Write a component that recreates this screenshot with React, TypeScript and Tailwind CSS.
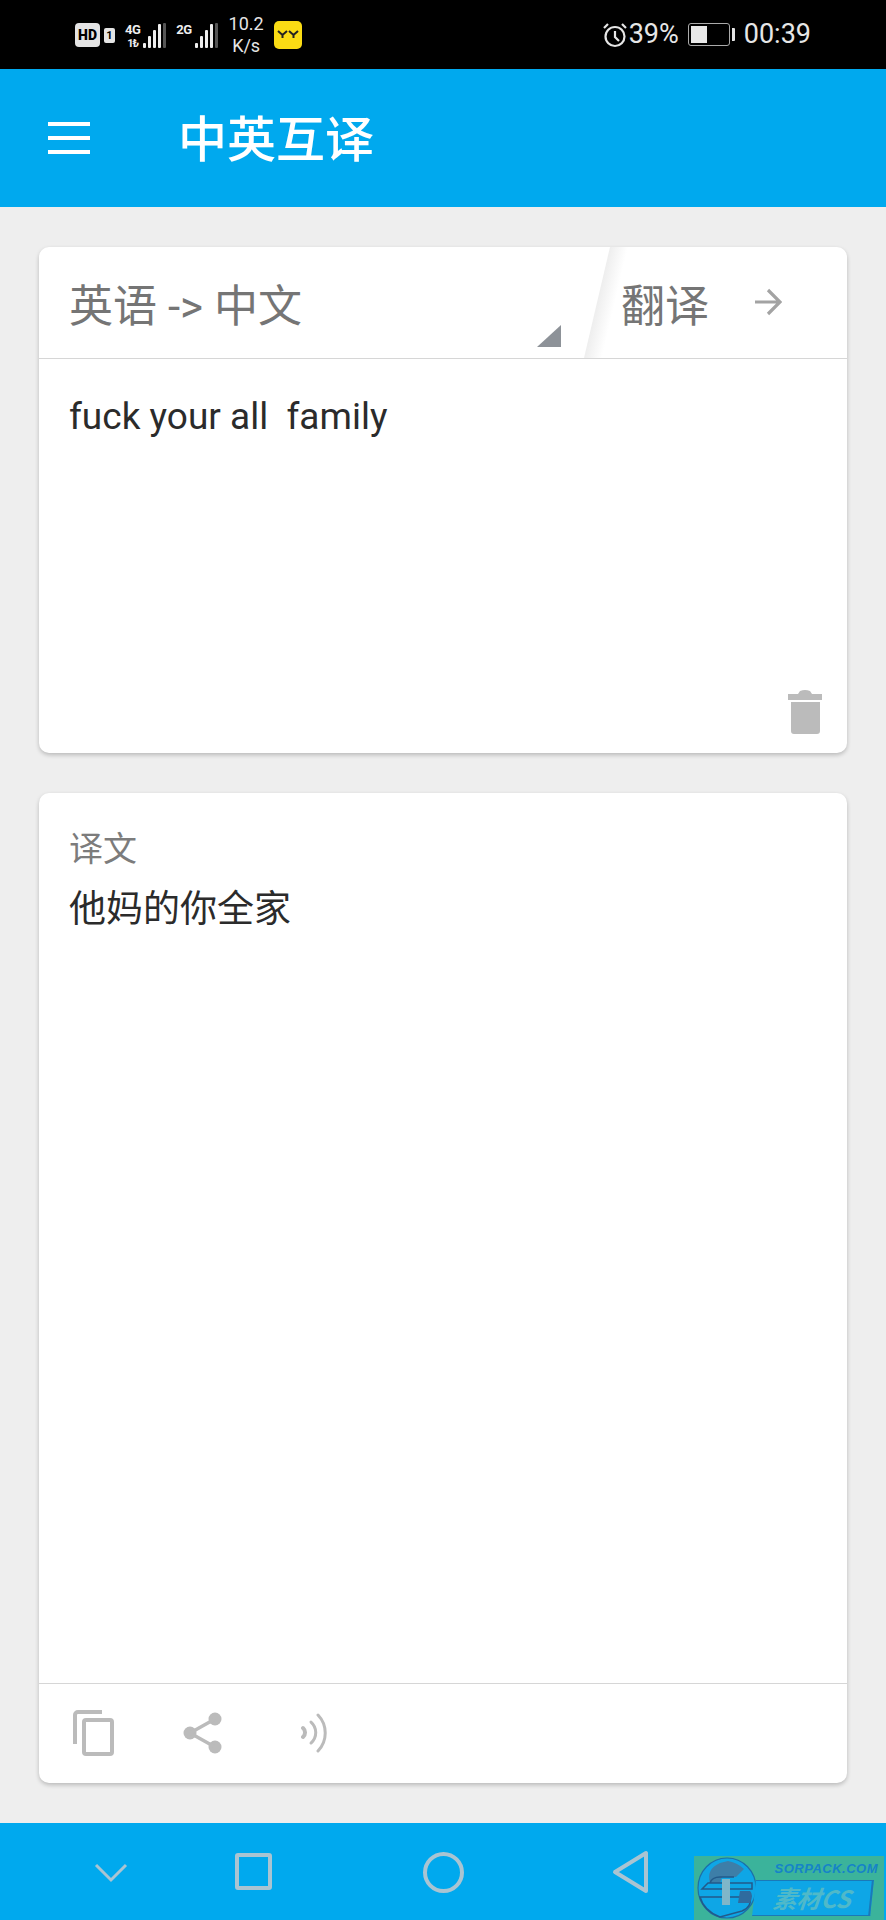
const cjk = "font-['Roboto','Noto_Sans_CJK_SC',sans-serif]"

function Signal({ label, dot }: { label: string; dot?: boolean }) {
  const heights = [5, 12, 18, 24]
  return (
    <div className="flex items-end gap-[2px] h-[26px]">
      <div className="flex flex-col items-center justify-between h-[25px] mr-[1px] font-['Roboto',sans-serif] font-bold text-[#eeeeee]">
        <span className="text-[13px] leading-[13px] tracking-[-0.5px]">{label}</span>
        {dot ? <span className="text-[11px] leading-[9px] tracking-[-1px]">1₺</span> : <span />}
      </div>
      {heights.map((h, i) => (
        <div key={i} className="w-[3px] bg-[#eeeeee] rounded-[1px]" style={{ height: h }} />
      ))}
      <div className="w-[3px] h-[25px] bg-[#555555] rounded-[1px]" />
    </div>
  )
}

function StatusBar() {
  return (
    <div className="h-[69px] bg-black flex items-center justify-between pl-[75px] pr-[75px] text-[#e6e6e6] font-['Roboto',sans-serif]">
      <div className="flex items-center">
        <div className="w-[25px] h-[24px] bg-[#e4e4e4] rounded-[4px] text-black text-[14px] leading-[24px] font-black text-center">HD</div>
        <div className="ml-[4px] mr-[10px] w-[11px] h-[15px] mt-[2px] bg-[#e4e4e4] rounded-[2px] text-black text-[11px] leading-[15px] font-bold text-center">1</div>
        <Signal label="4G" dot />
        <div className="w-[10px]" />
        <Signal label="2G" />
        <div className="ml-[10px] w-[37px] text-center text-[18px] leading-[22px]">
          <div>10.2</div>
          <div>K/s</div>
        </div>
        <div className="ml-[9px] w-[28px] h-[28px] rounded-[5px] bg-[#fbdc14] flex items-center justify-center">
          <svg width="22" height="10" viewBox="0 0 22 10" fill="none" stroke="#222" strokeWidth="2">
            <path d="M1 1l4.500 4L10 1M5.500 5v3M12 1l4.500 4L21 1M16.500 5v3" />
          </svg>
        </div>
      </div>
      <div className="flex items-center">
        <svg width="26" height="26" viewBox="0 0 26 26" fill="none" stroke="#e6e6e6" strokeWidth="2.200" className="mr-[1px]">
          <circle cx="13" cy="14.500" r="9.500" />
          <path d="M13 9v6l4 4M2 6l4-4M24 6l-4-4" />
        </svg>
        <span className="text-[27px] leading-none">39%</span>
        <div className="ml-[9px] w-[42px] h-[23px] border border-[#aaaaaa] rounded-[3px] p-[2px]">
          <div className="w-[16px] h-full bg-[#e8e8e8]" />
        </div>
        <div className="ml-[2px] w-[3px] h-[13px] bg-[#e4e4e4] rounded-r-[1px]" />
        <span className="ml-[9px] text-[27px] leading-none">00:39</span>
      </div>
    </div>
  )
}

function Header() {
  return (
    <header className="h-[138px] bg-[#00a9ee] flex items-center pl-[48px]">
      <div className="w-[42px] flex flex-col gap-[10px]">
        <div className="h-[4px] bg-white" />
        <div className="h-[4px] bg-white" />
        <div className="h-[4px] bg-white" />
      </div>
      <h1 className={`ml-[88px] mt-[4px] text-white text-[49px] leading-none font-medium ${cjk}`}>中英互译</h1>
    </header>
  )
}

function InputCard() {
  return (
    <section className="relative h-[506px] bg-white rounded-[10px] shadow-[0_2px_4px_rgba(0,0,0,0.22)] flex flex-col">
      <div className="relative h-[112px] border-b border-[#d6d6d6] flex items-center overflow-hidden">
        <span className={`ml-[30px] mt-[9px] text-[44px] leading-none text-[#757575] whitespace-pre ${cjk}`}>英语 -&gt; 中文</span>
        {/* slanted shade at the edge of the translate button */}
        <svg className="absolute left-[545px] top-0" width="50" height="111" viewBox="0 0 50 111">
          <defs>
            <linearGradient id="edge" gradientUnits="userSpaceOnUse" x1="0" y1="111" x2="17" y2="115">
              <stop offset="0" stopColor="#eeeeee" />
              <stop offset="1" stopColor="#ffffff" />
            </linearGradient>
          </defs>
          <path d="M26 0h24L24 111H0z" fill="url(#edge)" />
        </svg>
        <svg className="absolute left-[498px] top-[78px]" width="24" height="23" viewBox="0 0 24 23">
          <path d="M24 0v22H0z" fill="#8d9298" />
        </svg>
        <span className={`absolute left-[582px] top-[38px] text-[44px] leading-none text-[#757575] ${cjk}`}>翻译</span>
        <svg className="absolute left-[715px] top-[41px]" width="28" height="28" viewBox="0 0 28 28" fill="none" stroke="#a3a3a3" strokeWidth="3.200">
          <path d="M1 14h25M14 2l12 12-12 12" />
        </svg>
      </div>
      <p className={`px-[30px] pt-[36px] text-[37px] leading-[44px] text-[#2b2b2b] whitespace-pre ${cjk}`}>fuck your all  family</p>
      <svg className="absolute left-[749px] top-[443px]" width="34" height="44" viewBox="0 0 34 44" fill="#bbbbbb">
        <path d="M0 4h10l2-3q5-2 10 0l2 3h10v6H0zM3 12h29v29a3 3 0 0 1-3 3H6a3 3 0 0 1-3-3z" />
      </svg>
    </section>
  )
}

function ResultCard() {
  return (
    <section className="h-[990px] bg-white rounded-[10px] shadow-[0_2px_4px_rgba(0,0,0,0.22)] flex flex-col">
      <div className="flex-1 px-[30px] pt-[36px]">
        <div className={`text-[34px] leading-[40px] text-[#7c7c7c] ${cjk}`}>译文</div>
        <div className={`mt-[19px] text-[37px] leading-[44px] text-[#2b2b2b] ${cjk}`}>他妈的你全家</div>
      </div>
      <div className="h-[100px] border-t border-[#d6d6d6] flex items-center pl-[34px] pb-[1px]">
        <svg width="41" height="46" viewBox="0 0 41 46" fill="none" stroke="#bbbbbb" strokeWidth="4">
          <path d="M2 34V5a3 3 0 0 1 3-3h24" />
          <rect x="11" y="10" width="28" height="34" rx="2" />
        </svg>
        <svg className="ml-[69px]" width="40" height="42" viewBox="0 0 40 42" fill="#bbbbbb">
          <circle cx="7" cy="21" r="6.500" />
          <circle cx="32" cy="7" r="6.500" />
          <circle cx="32" cy="35" r="6.500" />
          <path d="M7 21L32 7M7 21l25 14" stroke="#bbbbbb" strokeWidth="3.500" />
        </svg>
        <svg className="ml-[78px]" width="28" height="40" viewBox="0 0 28 40" fill="none" stroke="#bbbbbb" strokeWidth="3" strokeLinecap="round">
          <path d="M2 15a6 6 0 0 1 0 9" strokeWidth="4" />
          <path d="M10 9a14 14 0 0 1 0 21" />
          <path d="M17 2a26 26 0 0 1 0 36" />
        </svg>
      </div>
    </section>
  )
}

function Watermark() {
  return (
    <div className="absolute left-[694px] top-[33px] w-[190px] h-[64px] bg-[#3bb39b] flex items-center overflow-hidden">
      <svg width="62" height="62" viewBox="0 0 62 62" className="ml-[2px] shrink-0">
        <ellipse cx="31" cy="31" rx="29" ry="30" fill="#0ea6e6" stroke="#1c6fa8" strokeWidth="1.200" />
        <path d="M14 26q-4-14 10-20l8-2q10 2 16 8l-8 8H26l-2 6z" fill="#3d7ea8" />
        <path d="M12 26h44v6H6zM14 26q2-6 10-6h14" fill="none" stroke="#235a8a" strokeWidth="1.500" />
        <path d="M4 40h40q8-6 10 0 2 10-8 14l-22 6Q8 54 4 40z" fill="#0ea6e6" stroke="#235a8a" strokeWidth="1.500" />
        <path d="M44 34h10q4 4 0 12H42z" fill="#2f6b9e" />
        <path d="M26 22h8v26h-8z" fill="#7fb6c9" />
      </svg>
      <div className="flex-1 min-w-0 font-['Liberation_Sans',sans-serif] italic font-bold">
        <div className="text-[#1583c8] text-[13px] leading-[15px] tracking-[0.5px] text-right pr-[6px]">SORPACK.COM</div>
        <div className="mt-[4px] mr-[12px] ml-[-4px] h-[36px] -skew-x-6 bg-[#0ea6e6] border-y border-r-2 border-[#1a79b8] flex items-center justify-center text-[#4fb9c9] text-[24px] leading-none font-['Noto_Sans_CJK_SC',sans-serif]">素材CS</div>
      </div>
    </div>
  )
}

function NavBar() {
  return (
    <nav className="relative h-[97px] bg-[#00a9ee]">
      <svg className="absolute left-[93px] top-[39px]" width="36" height="22" viewBox="0 0 36 22" fill="none" stroke="#a9c4d2" strokeWidth="3">
        <path d="M3 3l15 15L33 3" />
      </svg>
      <div className="absolute left-[235px] top-[30px] w-[37px] h-[37px] border-[4px] border-[#a9c4d2] rounded-[3px]" />
      <div className="absolute left-[423px] top-[29px] w-[41px] h-[41px] border-[4px] border-[#a9c4d2] rounded-full" />
      <svg className="absolute left-[612px] top-[27px]" width="38" height="44" viewBox="0 0 38 44" fill="none" stroke="#a9c4d2" strokeWidth="4" strokeLinejoin="round">
        <path d="M34 3v38L3 22z" />
      </svg>
      <Watermark />
    </nav>
  )
}

export default function App() {
  return (
    <div className="w-[886px] h-[1920px] bg-[#eeeeee] flex flex-col overflow-hidden">
      <StatusBar />
      <Header />
      <main className="flex-1 px-[39px] pt-[40px] flex flex-col gap-[40px]">
        <InputCard />
        <ResultCard />
      </main>
      <NavBar />
    </div>
  )
}
